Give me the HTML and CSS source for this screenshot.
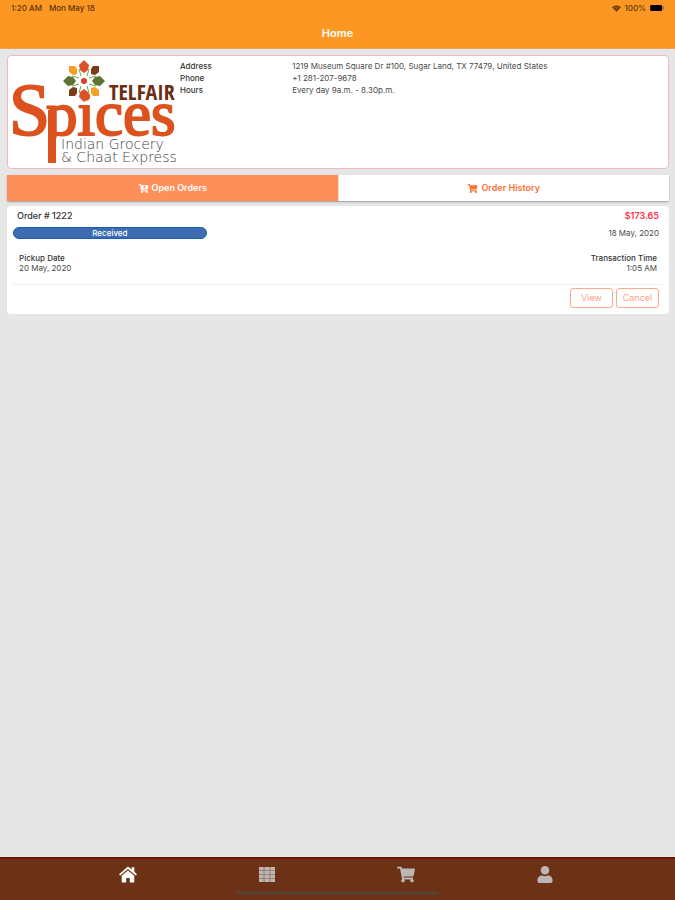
FILE: index.html
```html
<!DOCTYPE html>
<html lang="en">
<head>
<meta charset="utf-8">
<meta name="viewport" content="width=device-width, initial-scale=1">
<title>Home</title>
<link rel="stylesheet" href="styles.css">
</head>
<body>
<svg class="defs" aria-hidden="true">
  <symbol id="cart" viewBox="0 0 576 512"><path d="M528 301l47-208c4-15-8-29-23-29H159l-9-45C148 8 138 0 126 0H24C11 0 0 11 0 24v16c0 13 11 24 24 24h70l70 343a56 56 0 1 0 67 9h210a56 56 0 1 0 64-11l5-25c4-15-8-29-23-29H218l-6-32h293c11 0 21-8 23-18z"/></symbol>
</svg>
<header class="top">
  <div class="status">
    <span>1:20 AM</span>
    <span>Mon May 18</span>
    <span class="status-right">
      <svg class="wifi" viewBox="0 0 18 13" aria-hidden="true"><path d="M0 4a13 13 0 0 1 18 0L9 13z"/><path class="wifi-gap" d="M2 6.500a10 10 0 0 1 14 0M5 9a6 6 0 0 1 8 0"/></svg>
      <span>100%</span>
      <svg class="battery" viewBox="0 0 16 7" aria-hidden="true"><rect width="14" height="7" rx="1.500"/><rect x="15" y="2" width="1" height="3" opacity=".5"/></svg>
    </span>
  </div>
  <h1>Home</h1>
</header>
<main>
  <section class="card store">
    <svg class="logo" viewBox="0 0 168 108" role="img" aria-label="Telfair Spices Indian Grocery and Chaat Express">
      <text class="logo-name" x="99" y="42">TELFAIR</text>
      <text class="logo-big" x="-1" y="77">S</text>
      <text class="logo-mid" x="36" y="77">pices</text>
      <path fill="#fff" d="M34 80h4v20h-4zM46 80h24v20H46z"/>
      <rect x="38" y="52" width="8" height="53" fill="#dc521e"/>
      <g transform="translate(74 23)">
        <g>
          <path fill="#dc5226" d="M0-21l5 5-1 5-4 3-4-3-1-5zM0 21l5-5-1-5-4-3-4 3-1 5z"/>
          <path fill="#5d7434" d="M-21 0l5-5 5 1 3 4-3 4-5 1zM21 0l-5-5-5 1-3 4 3 4 5 1z"/>
          <path fill="#7c3a18" d="M7-12l2-3h6v6l-4 3-4-1zM-7 12l-2 3h-6v-6l4-3 4 1z"/>
          <path fill="#f4a022" d="M-7-12l-2-3h-6v6l4 3 4-1zM7 12l2 3h6v-6l-4-3-4 1z"/>
        </g>
        <path class="stems" d="M-3-5l-2-7M3-5l2-7M-3 5l-2 7M3 5l2 7M-5-3l-7-2M-5 3l-7 2M5-3l7-2M5 3l7 2"/>
        <circle r="3" fill="#e23b26"/>
      </g>
      <text class="logo-sub" x="51" y="91">Indian Grocery</text>
      <text class="logo-sub" x="51" y="104">&amp; Chaat Express</text>
    </svg>
    <dl class="info">
      <dt>Address</dt><dd>1219 Museum Square Dr #100, Sugar Land, TX 77479, United States</dd>
      <dt>Phone</dt><dd>+1 281-207-9678</dd>
      <dt>Hours</dt><dd>Every day 9a.m. - 8.30p.m.</dd>
    </dl>
  </section>
  <div class="segments">
    <button class="segment active" type="button"><svg viewBox="0 0 576 512" aria-hidden="true"><use href="#cart"/><path class="plus" d="M340 110v140M270 180h140"/></svg>Open Orders</button>
    <button class="segment" type="button"><svg viewBox="0 0 576 512" aria-hidden="true"><use href="#cart"/></svg>Order History</button>
  </div>
  <article class="card order">
    <div class="row title"><h2>Order # 1222</h2><strong class="price">$173.65</strong></div>
    <div class="row state"><span class="badge">Received</span><span>18 May, 2020</span></div>
    <div class="row dates">
      <div><b>Pickup Date</b><br>20 May, 2020</div>
      <div class="right"><b>Transaction Time</b><br>1:05 AM</div>
    </div>
    <div class="actions"><button type="button">View</button><button type="button">Cancel</button></div>
  </article>
</main>
<nav class="tabs">
  <a class="current" href="#home" aria-label="Home"><svg viewBox="0 0 20 18" aria-hidden="true"><path d="M10 4.500l7 6V17a1 1 0 0 1-1 1h-4v-5H8v5H4a1 1 0 0 1-1-1v-6.500z"/><path d="M10 0l4 3.400V1h3v5l3 2.600-1.300 1.600L10 2.800l-8.700 7.400L0 8.600z"/></svg></a>
  <a href="#catalog" aria-label="Catalog"><svg class="grid" viewBox="0 0 16 15" aria-hidden="true"><path opacity=".6" d="M0 0h16v15H0z"/><path d="M0 0h4.500v3H0zM5.700 0h4.600v3H5.700zM11.500 0H16v3h-4.500zM0 4h4.500v3H0zM5.700 4h4.600v3H5.700zM11.500 4H16v3h-4.500zM0 8h4.500v3H0zM5.700 8h4.600v3H5.700zM11.500 8H16v3h-4.500zM0 12h4.500v3H0zM5.700 12h4.600v3H5.700zM11.500 12H16v3h-4.500z"/></svg></a>
  <a href="#cart-page" aria-label="Cart"><svg viewBox="0 0 576 512" aria-hidden="true"><use href="#cart"/></svg></a>
  <a href="#account" aria-label="Account"><svg class="user" viewBox="0 0 16 18" aria-hidden="true"><circle cx="8" cy="4.500" r="4.500"/><path d="M0 16v-1c0-3 2-5 5-5 2 1 4 1 6 0 3 0 5 2 5 5v1a2 2 0 0 1-2 2H2a2 2 0 0 1-2-2z"/></svg></a>
</nav>
</body>
</html>
```

FILE: styles.css
```css
* { box-sizing: border-box; }

body {
  margin: 0;
  min-height: 100vh;
  display: flex;
  flex-direction: column;
  background: #e6e6e6;
  color: #4a4a4a;
  font: 8px/12px Inter, "Liberation Sans", sans-serif;
}

.defs { position: absolute; width: 0; height: 0; }

.top {
  height: 49px;
  background: #fd9723;
  border-bottom: 1px solid #eca15c;
}

.status {
  display: flex;
  gap: 7px;
  padding: 2px 10px 0 11px;
  color: #5a3508;
  font-weight: 500;
}
.status-right { display: flex; align-items: center; gap: 3px; margin-left: auto; }
.wifi { width: 9px; height: 7px; fill: #5a3508; }
.wifi-gap { fill: none; stroke: #fd9723; }
.battery { width: 16px; height: 6px; fill: #000; }

h1 {
  margin: 11px 0 0;
  color: #fff;
  font-size: 11px;
  line-height: 16px;
  font-weight: 600;
  text-align: center;
}

main {
  flex: 1;
  display: flex;
  flex-direction: column;
  padding: 6px 6px 8px 7px;
}

.card { background: #fff; border-radius: 4px; }

.store {
  display: flex;
  gap: 2px;
  padding: 2px;
  border: 1px solid #f1b9bd;
}
.logo { flex: none; width: 168px; height: 108px; }
.stems { fill: none; stroke: #72a84c; }
.logo text { font-family: "Liberation Serif", serif; }
.logo .logo-name { fill: #6b2d14; font: 700 22px "Open Sans Condensed", "DejaVu Sans Condensed", sans-serif; }
.logo-big, .logo-mid { fill: #dc521e; stroke: #dc521e; stroke-width: 2px; }
.logo-big { font-size: 74px; }
.logo-mid { font-size: 63px; }
.logo .logo-sub { fill: #444; font: 200 14px "DejaVu Sans", sans-serif; }

.info {
  flex: 1;
  display: grid;
  grid-template-columns: 3fr 10fr;
  align-content: start;
  margin: 2px 0 0;
}
dt { color: #333; font-weight: 500; }
dd { margin: 0; }

.segments {
  display: flex;
  margin-top: 6px;
  background: #fff;
  border-radius: 2px;
  box-shadow: 0 1px 2px #9b9b9b;
}
.segment {
  flex: 1;
  display: flex;
  justify-content: center;
  align-items: center;
  gap: 3px;
  height: 26px;
  padding: 0;
  border: 0;
  background: #fff;
  color: #fd7134;
  font: 600 9px/12px Inter, "Liberation Sans", sans-serif;
}
.segment svg { width: 11px; height: 9px; fill: currentColor; }
.segment.active { background: #ff8f59; color: #fff; border-right: 1px solid #ddd; }
.plus { stroke: #ff8f59; stroke-width: 50; }

.order { margin-top: 5px; padding: 4px 6px 6px; }
.row { display: flex; justify-content: space-between; align-items: center; }
.title { padding: 0 4px; }
h2 { margin: 0; color: #333; font-size: 9px; line-height: 12px; font-weight: 500; }
.price { color: #ff2f48; font-size: 9px; font-weight: 600; }
.state { margin-top: 5px; padding-right: 4px; }
.badge {
  width: 30%;
  border-radius: 6px;
  background: #3d6cb1;
  border: 1px solid #185cab;
  color: #fff;
  font-size: 8px;
  line-height: 10px;
  font-weight: 500;
  text-align: center;
}
.dates { margin-top: 14px; padding: 0 6px; line-height: 10px; }
.dates b { color: #333; font-weight: 500; }
.right { text-align: right; }
.actions {
  display: flex;
  justify-content: flex-end;
  gap: 3px;
  margin-top: 11px;
  padding: 3px 4px 0;
  border-top: 1px solid #efefef;
}
.actions button {
  width: 43px;
  height: 20px;
  padding: 0;
  border: 1px solid #ffa88a;
  border-radius: 3px;
  background: #fff;
  color: #ffa080;
  font: 9px/12px Inter, "Liberation Sans", sans-serif;
}

.tabs {
  position: relative;
  display: grid;
  grid-template-columns: repeat(4, 1fr);
  height: 43px;
  padding: 0 60px 0 58px;
  background: #6d3216;
  border-top: 2px solid #741205;
}
.tabs::after {
  content: "";
  position: absolute;
  bottom: 5px;
  left: 35%;
  width: 30%;
  height: 4px;
  border-radius: 2px;
  background: #5b402f;
}
.tabs a { display: flex; justify-content: center; padding-top: 7px; color: #bcb6b4; }
.tabs a.current { color: #fff; }
.tabs svg { width: 18px; height: 17px; fill: currentColor; }
.tabs .grid { width: 16px; height: 17px; }
```
